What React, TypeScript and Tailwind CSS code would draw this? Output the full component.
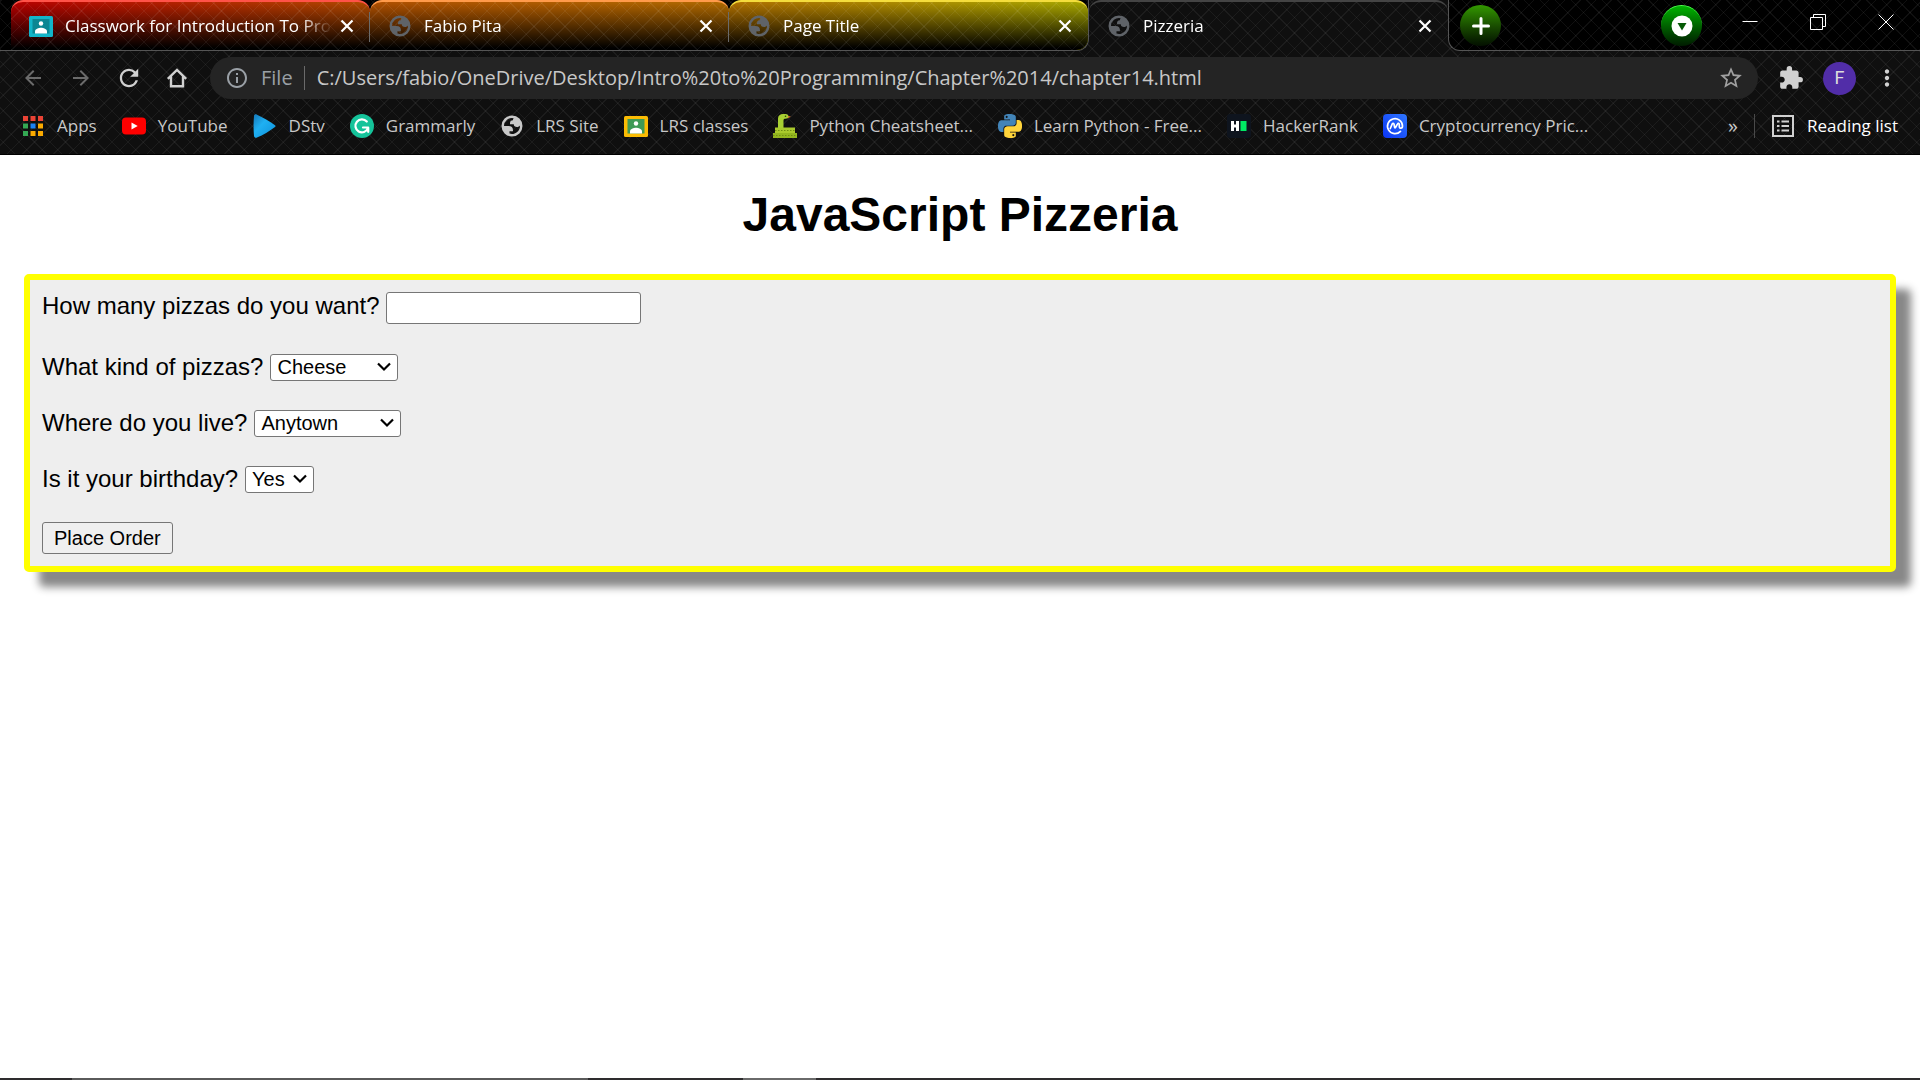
import type { ReactNode } from "react";
import {
  MdArrowBack,
  MdArrowForward,
  MdExtension,
  MdInfoOutline,
  MdMoreVert,
  MdRefresh,
  MdStarBorder,
} from "react-icons/md";

function GlobeIcon() {
  return (
    <svg viewBox="0 0 24 24" className="size-6" fill="currentColor" fillRule="evenodd" aria-hidden="true">
      <path d="M12 1.500a10.500 10.500 0 1 1 0 21 10.500 10.500 0 0 1 0-21zM4 12h4.400c3.407.022 4.922 1.730 4.543 5.127H9.488v2.470a8.004 8.004 0 0 0 10.498-8.083C19.327 12.504 18.332 13 17 13c-2.137 0-3.206-.916-3.206-2.750h-3.748c-.274-2.728.683-4.092 2.870-4.092 0-.975.327-1.597.811-1.970A8.004 8.004 0 0 0 4 12z" />
    </svg>
  );
}

function ClassroomIcon({ frame, board }: { frame: string; board: string }) {
  return (
    <svg viewBox="0 0 24 24" className="size-6" aria-hidden="true">
      <rect x="0" y="2" width="24" height="21" rx="1.5" fill={frame} />
      <rect x="3.5" y="5" width="17" height="14.5" fill={board} />
      <circle cx="12" cy="9.5" r="2.2" fill="#fff" />
      <path d="M6 19.5v-2.2c0-2.2 3.6-3.6 6-3.6s6 1.4 6 3.6v2.2z" fill="#fff" />
    </svg>
  );
}

function AppsIcon() {
  const colors = ["#ea4335", "#ea4335", "#ea4335", "#34a853", "#1a82f7", "#fbaa00", "#34a853", "#fbaa00", "#fbaa00"];
  return (
    <svg viewBox="0 0 24 24" className="size-6" aria-hidden="true">
      {colors.map((color, i) => (
        <rect key={i} x={2 + (i % 3) * 7.5} y={2 + Math.floor(i / 3) * 7.5} width="5" height="5" fill={color} />
      ))}
    </svg>
  );
}

function YouTubeIcon() {
  return (
    <svg viewBox="0 0 24 24" className="size-6" aria-hidden="true">
      <rect x="0" y="3.5" width="24" height="17" rx="4" fill="#f00" />
      <path d="M9.5 8.5v7l6.2-3.5z" fill="#fff" />
    </svg>
  );
}

function DstvIcon() {
  return (
    <svg viewBox="0 0 24 24" className="size-6" aria-hidden="true">
      <defs>
        <linearGradient id="dstv" x1="0" y1="0" x2="1" y2="1">
          <stop offset="0" stopColor="#1577b8" />
          <stop offset="0.4" stopColor="#1fb0f2" />
          <stop offset="1" stopColor="#0d8fd8" />
        </linearGradient>
      </defs>
      <path d="M1 2C1 .4 2.700 0 4 .7 10 3.500 16.500 7.200 22 11.200c.8.6.8 1.200 0 1.700C16.500 17 10 21 4 23.600 2.700 24.200 1.200 23.600 1 22 .4 15.500.4 8.500 1 2z" fill="url(#dstv)" />
    </svg>
  );
}

function GrammarlyIcon() {
  return (
    <svg viewBox="0 0 24 24" className="size-6" aria-hidden="true">
      <circle cx="12" cy="12" r="12" fill="#15c39a" />
      <path d="M16.800 7.500A6.500 6.500 0 1 0 18 14.200M13 13.500h5.200v4.300" fill="none" stroke="#fff" strokeWidth="2.200" strokeLinecap="round" strokeLinejoin="round" />
    </svg>
  );
}

function SnakeIcon() {
  return (
    <svg viewBox="0 0 24 24" className="size-6" aria-hidden="true">
      <path d="M14 1.500l3.500 1.300L14 4.200z" fill="#d8722c" />
      <path d="M5 14V4.500C5 1.500 7.200 0 10 0h2.500c2 0 3 1.200 3 2.600 0 1.500-1.200 2.200-3 2.200-1.500 0-2 .5-2 1.700V14z" fill="#a8d033" />
      <rect x="2" y="13.500" width="20" height="5.500" fill="#a9c92c" />
      <rect x="0" y="19" width="24" height="5" fill="#93b51f" />
      <path d="M2 16.500h20M0 21.500h24" stroke="#6e8c12" strokeWidth="1" strokeDasharray="1.500 1.500" />
      <path d="M15 2.200l3 .6-3 1z" fill="#d8722c" />
      <circle cx="12.500" cy="2.200" r=".8" fill="#2c3b08" />
    </svg>
  );
}

function PythonIcon() {
  return (
    <svg viewBox="0 0 24 24" className="size-6" aria-hidden="true">
      <path
        fill="#4284b8"
        d="M14.25.18l.9.2.73.26.59.3.45.32.34.34.25.34.16.33.1.3.04.26.02.2-.01.13V8.5l-.05.63-.13.55-.21.46-.26.38-.3.31-.33.25-.35.19-.35.14-.33.1-.3.07-.26.04-.21.02H8.770l-.69.05-.59.14-.5.22-.41.27-.33.32-.27.35-.2.36-.15.37-.1.35-.07.32-.04.27-.02.21v3.06H3.170l-.21-.03-.28-.07-.32-.12-.35-.18-.36-.26-.36-.36-.35-.46-.32-.59-.28-.73-.21-.88-.14-1.05-.05-1.230.06-1.220.16-1.040.24-.87.32-.71.36-.57.4-.44.42-.33.42-.24.4-.16.36-.1.32-.05.24-.01h.16l.06.01h8.160v-.83H6.180l-.01-2.750-.02-.37.05-.34.11-.31.17-.28.25-.26.31-.23.38-.2.44-.18.51-.15.58-.12.64-.1.71-.06.77-.04.84-.02 1.270.05zm-6.300 1.980l-.23.33-.08.41.08.41.23.34.33.22.41.09.41-.09.33-.22.23-.34.08-.41-.08-.41-.23-.33-.33-.22-.41-.09-.41.09z"
      />
      <path
        fill="#ffd43b"
        d="M21.040 6.110l.28.06.32.12.35.18.36.27.36.35.35.47.32.59.28.73.21.88.14 1.040.05 1.230-.06 1.230-.16 1.040-.24.86-.32.71-.36.57-.4.45-.42.33-.42.24-.4.16-.36.09-.32.05-.24.02-.16-.01h-8.220v.82h5.840l.01 2.760.02.36-.05.34-.11.31-.17.29-.25.25-.31.24-.38.2-.44.17-.51.15-.58.13-.64.09-.71.07-.77.04-.84.01-1.270-.04-1.070-.14-.9-.2-.73-.25-.59-.3-.45-.33-.34-.34-.25-.34-.16-.33-.1-.3-.04-.25-.02-.2.01-.13v-5.340l.05-.64.13-.54.21-.46.26-.38.3-.32.33-.24.35-.2.35-.14.33-.1.3-.06.26-.04.21-.02.13-.01h5.840l.69-.05.59-.14.5-.21.41-.28.33-.32.27-.35.2-.36.15-.36.1-.35.07-.32.04-.28.02-.21V6.070h2.090l.14.01zm-6.470 14.250l-.23.33-.08.41.08.41.23.33.33.23.41.08.41-.08.33-.23.23-.33.08-.41-.08-.41-.23-.33-.33-.23-.41-.08-.41.08z"
      />
    </svg>
  );
}

function HackerRankIcon() {
  return (
    <svg viewBox="0 0 24 24" className="size-6" aria-hidden="true">
      <rect width="24" height="24" rx="3" fill="#0e141e" />
      <path d="M4 7h3v3.500h2V7h3v10H9v-3.500H7V17H4z" fill="#fff" />
      <rect x="13.500" y="7" width="6" height="10" fill="#00ea64" />
    </svg>
  );
}

function CoinIcon() {
  return (
    <svg viewBox="0 0 24 24" className="size-6" aria-hidden="true">
      <defs>
        <linearGradient id="coin" x1="1" y1="0" x2="0" y2="1">
          <stop offset="0" stopColor="#2f77ff" />
          <stop offset="1" stopColor="#0b35f5" />
        </linearGradient>
      </defs>
      <rect width="24" height="24" rx="4" fill="url(#coin)" />
      <path d="M17.500 17.300A7.500 7.500 0 1 1 19.500 12c0 2.800-3.200 2.800-3.200.5V10.500c0-1.500-1.300-1.600-1.900-.4L12.500 13.500c-.3.500-.8.500-.9-.1L11 10.200c-.2-1.200-1.300-1.200-1.800-.2L7.300 14.500" fill="none" stroke="#fff" strokeWidth="1.700" strokeLinecap="round" />
    </svg>
  );
}

function HomeIcon() {
  return (
    <svg viewBox="0 0 24 24" className="size-6" fill="none" stroke="currentColor" strokeWidth="2.400" aria-hidden="true">
      <path d="M2.800 12.800L12 4l9.200 8.800M6 10.500V20.300h12V10.500" />
    </svg>
  );
}

function ReadingListIcon() {
  return (
    <svg viewBox="0 0 24 24" className="size-6" fill="none" stroke="#d0d0d0" strokeWidth="2" aria-hidden="true">
      <path d="M2 2h20v20H2zM6 7.500h2.500M6 12h2.500M6 16.500h2.500M10.500 7.500H18M10.500 12H18M10.500 16.500H18" />
    </svg>
  );
}

function CloseGlyph() {
  return (
    <svg viewBox="0 0 14 14" className="size-3.5" stroke="currentColor" strokeWidth="2.200" aria-hidden="true">
      <path d="M1.500 1.500l11 11M12.500 1.500l-11 11" />
    </svg>
  );
}

const tabs: { title: string; icon: ReactNode; look: string; divider: boolean }[] = [
  {
    title: "Classwork for Introduction To Pro",
    icon: <ClassroomIcon frame="#12b5c9" board="#0b8693" />,
    look: "rounded-t-xl border-t-2 border-[#ff5248] bg-[repeating-linear-gradient(45deg,#ffffff10_0_1px,#0000_1px_11px),repeating-linear-gradient(-45deg,#ffffff10_0_1px,#0000_1px_11px),linear-gradient(to_bottom,#0000,#000_96%),linear-gradient(to_right,#b80000,#b04a00)]",
    divider: true,
  },
  {
    title: "Fabio Pita",
    icon: <GlobeIcon />,
    look: "rounded-t-xl border-t-2 border-[#ff9a4a] bg-[repeating-linear-gradient(45deg,#ffffff10_0_1px,#0000_1px_11px),repeating-linear-gradient(-45deg,#ffffff10_0_1px,#0000_1px_11px),linear-gradient(to_bottom,#0000,#000_96%),linear-gradient(to_right,#b05000,#b06a00)]",
    divider: true,
  },
  {
    title: "Page Title",
    icon: <GlobeIcon />,
    look: "rounded-t-xl rounded-br-xl border-t-2 border-[#f4dc3c] bg-[repeating-linear-gradient(45deg,#ffffff10_0_1px,#0000_1px_11px),repeating-linear-gradient(-45deg,#ffffff10_0_1px,#0000_1px_11px),linear-gradient(to_bottom,#0000,#000_96%),linear-gradient(to_right,#b07000,#a8a800)]",
    divider: false,
  },
];

function Tab({ title, icon, look, divider }: { title: string; icon: ReactNode; look: string; divider?: boolean }) {
  return (
    <div className={`relative flex h-full w-[359px] items-center pl-[18px] pr-4 ${look}`}>
      <button className="flex min-w-0 flex-1 items-center gap-3 text-left text-[#5f6368]">
        <span className="shrink-0">{icon}</span>
        <span className="flex-1 whitespace-nowrap text-white mask-[linear-gradient(to_right,#000_88%,transparent)]">
          {title}
        </span>
      </button>
      <button aria-label={`Close ${title}`} className="ml-2 text-white">
        <CloseGlyph />
      </button>
      {divider && <span className="absolute right-0 top-2.5 h-[30px] w-px bg-[#6a6a6a]" />}
    </div>
  );
}

const bookmarks: { label: string; icon: ReactNode }[] = [
  { label: "Apps", icon: <AppsIcon /> },
  { label: "YouTube", icon: <YouTubeIcon /> },
  { label: "DStv", icon: <DstvIcon /> },
  { label: "Grammarly", icon: <GrammarlyIcon /> },
  { label: "LRS Site", icon: <GlobeIcon /> },
  { label: "LRS classes", icon: <ClassroomIcon frame="#fbbc04" board="#3f9a56" /> },
  { label: "Python Cheatsheet...", icon: <SnakeIcon /> },
  { label: "Learn Python - Free...", icon: <PythonIcon /> },
  { label: "HackerRank", icon: <HackerRankIcon /> },
  { label: "Cryptocurrency Pric...", icon: <CoinIcon /> },
];

const questions = [
  { id: "kind", label: "What kind of pizzas?", options: ["Cheese", "Pepperoni", "Supreme"], width: "w-32" },
  { id: "town", label: "Where do you live?", options: ["Anytown", "Sacramento", "Your Town"], width: "w-[147px]" },
  { id: "birthday", label: "Is it your birthday?", options: ["Yes", "No"], width: "w-[69px]" },
];

function TabStrip() {
  return (
    <div className="flex h-[51px]">
      <div className="flex rounded-br-xl border-b border-r border-[#555] bg-black bg-[repeating-linear-gradient(45deg,#ffffff10_0_1px,#0000_1px_11px),repeating-linear-gradient(-45deg,#ffffff10_0_1px,#0000_1px_11px)] pl-[11px]">
        {tabs.map((tab) => (
          <Tab key={tab.title} {...tab} />
        ))}
      </div>
      <Tab title="Pizzeria" icon={<GlobeIcon />} look="rounded-t-xl border-t-2 border-[#444] pb-px" />
      <div className="flex flex-1 items-start justify-between rounded-bl-xl border-b border-l border-[#555] bg-black bg-[repeating-linear-gradient(45deg,#ffffff10_0_1px,#0000_1px_11px),repeating-linear-gradient(-45deg,#ffffff10_0_1px,#0000_1px_11px)] text-white">
        <button aria-label="New tab" className="ml-[11px] mt-[5px] flex size-[41px] items-center justify-center rounded-full bg-linear-to-b from-[#339900] to-[#041000]">
          <svg viewBox="0 0 18 18" className="size-[18px]" stroke="currentColor" strokeWidth="3" strokeLinecap="round">
            <path d="M9 1.500v15M1.500 9h15" />
          </svg>
        </button>
        <div className="flex">
          <button aria-label="Search tabs" className="mr-3.5 mt-[5px] flex size-[41px] items-center justify-center rounded-full border-t border-[#4cff4c] bg-linear-to-b from-[#00b400] to-[#001c00]">
            <svg viewBox="0 0 22 22" className="size-[22px]">
              <circle cx="11" cy="11" r="10.500" fill="#fff" />
              <path d="M6.500 8h9l-4.500 7.500z" fill="#055a05" />
            </svg>
          </button>
          <button aria-label="Minimize" className="flex h-[43px] w-[68px] items-center justify-center">
            <svg viewBox="0 0 16 16" className="size-4" stroke="currentColor">
              <path d="M0.500 7.500h15" />
            </svg>
          </button>
          <button aria-label="Restore" className="flex h-[43px] w-[68px] items-center justify-center">
            <svg viewBox="0 0 16 16" className="size-4" fill="none" stroke="currentColor">
              <path d="M0.500 3.500h12v12h-12zM3.500 3.500v-3h12v12h-3" />
            </svg>
          </button>
          <button aria-label="Close window" className="flex h-[43px] w-[68px] items-center justify-center">
            <svg viewBox="0 0 16 16" className="size-4" stroke="currentColor">
              <path d="M0.500 0.500l15 15M15.500 0.500l-15 15" />
            </svg>
          </button>
        </div>
      </div>
    </div>
  );
}

function Toolbar() {
  return (
    <div className="flex h-[54px] items-center pl-[21px] pr-5 text-[#d0d0d0]">
      <div className="flex items-center gap-6">
        <button aria-label="Back" className="text-[#6b6b6b]"><MdArrowBack className="size-6" /></button>
        <button aria-label="Forward" className="text-[#6b6b6b]"><MdArrowForward className="size-6" /></button>
        <button aria-label="Reload"><MdRefresh className="size-6 scale-115" /></button>
        <button aria-label="Home"><HomeIcon /></button>
      </div>
      <div className="ml-[21px] flex h-[42px] flex-1 items-center rounded-full bg-[#242424] pl-[15px] pr-3.5 text-xl">
        <MdInfoOutline className="size-6 text-[#9aa0a6]" />
        <label htmlFor="address" className="ml-3 text-[#9aa0a6]">File</label>
        <span className="ml-[11px] h-6 w-px bg-[#6a6a6a]" />
        <input
          id="address"
          className="ml-3 min-w-0 flex-1 bg-transparent text-[#c8c8c8] outline-none"
          defaultValue="C:/Users/fabio/OneDrive/Desktop/Intro%20to%20Programming/Chapter%2014/chapter14.html"
        />
        <button aria-label="Bookmark this page" className="text-[#a0a0a0]"><MdStarBorder className="size-[26px]" /></button>
      </div>
      <button aria-label="Extensions" className="ml-5"><MdExtension className="size-[26px]" /></button>
      <button aria-label="Profile" className="ml-[19px] flex size-[33px] items-center justify-center rounded-full bg-[#512da8] font-['Roboto',sans-serif] text-lg text-[#ddd]">F</button>
      <button aria-label="Menu" className="ml-[18px]"><MdMoreVert className="size-[26px]" /></button>
    </div>
  );
}

function BookmarksBar() {
  return (
    <nav className="flex h-[50px] items-center border-b border-black pb-[7px] pl-[21px] pr-[22px] text-[#c8c8c8]">
      <ul className="flex flex-1 gap-[25px]">
        {bookmarks.map(({ label, icon }) => (
          <li key={label}>
            <a href="#" className="flex items-center gap-3 whitespace-nowrap">
              {icon}
              {label}
            </a>
          </li>
        ))}
      </ul>
      <button aria-label="More bookmarks" className="text-xl leading-6">»</button>
      <span className="ml-4 h-6 w-px bg-[#4a4a4a]" />
      <button className="ml-4 flex items-center gap-3 text-white">
        <ReadingListIcon />
        Reading list
      </button>
    </nav>
  );
}

function OrderForm() {
  return (
    <form
      className="mx-6 mt-8 flex flex-col items-start gap-[29px] rounded-[5px] border-[6px] border-[#ff0] bg-[#eee] p-3 text-2xl leading-[27px] shadow-[15px_15px_8px_#888]"
      onSubmit={(event) => event.preventDefault()}
    >
      <div className="flex min-h-[33px] items-start gap-1.5">
        <label htmlFor="count">How many pizzas do you want?</label>
        <input id="count" type="text" className="h-8 w-[255px] rounded-[3px] border border-[#767676] bg-white px-1 text-xl" />
      </div>
      {questions.map(({ id, label, options, width }) => (
        <div key={id} className="flex items-start gap-[7px]">
          <label htmlFor={id} className="leading-[25px]">{label}</label>
          <div className="relative">
            <select id={id} className={`block h-[27px] appearance-none rounded-[3px] border border-[#767676] bg-white pl-1.5 text-xl leading-[25px] ${width}`}>
              {options.map((option) => (
                <option key={option}>{option}</option>
              ))}
            </select>
            <svg viewBox="0 0 14 10" className="pointer-events-none absolute right-[7px] top-2 h-2.5 w-3.5" fill="none" stroke="#000" strokeWidth="2.200">
              <path d="M1 1.500l6 6 6-6" />
            </svg>
          </div>
        </div>
      ))}
      <button className="h-8 rounded-[3px] border border-[#767676] bg-[#efefef] px-[11px] text-xl leading-[30px]">Place Order</button>
    </form>
  );
}

export default function App() {
  return (
    <div className="flex min-h-screen flex-col bg-white">
      <header className="bg-[#0f0f0f] bg-[repeating-linear-gradient(45deg,#ffffff0e_0_1px,#0000_1px_11px),repeating-linear-gradient(-45deg,#ffffff0e_0_1px,#0000_1px_11px)] font-['Open_Sans',sans-serif] text-[17px] leading-6">
        <TabStrip />
        <Toolbar />
        <BookmarksBar />
      </header>
      <main className="flex-1 font-['Liberation_Sans',Arial,sans-serif] text-black">
        <h1 className="mt-8 text-center text-5xl font-bold leading-[55px]">JavaScript Pizzeria</h1>
        <OrderForm />
      </main>
      <footer className="flex h-0.5 bg-[#2e2c2e]">
        <span className="ml-[72px] w-[516px] bg-[#5a5a5a]" />
        <span className="ml-[155px] w-[73px] bg-[#6a6a6a]" />
      </footer>
    </div>
  );
}
